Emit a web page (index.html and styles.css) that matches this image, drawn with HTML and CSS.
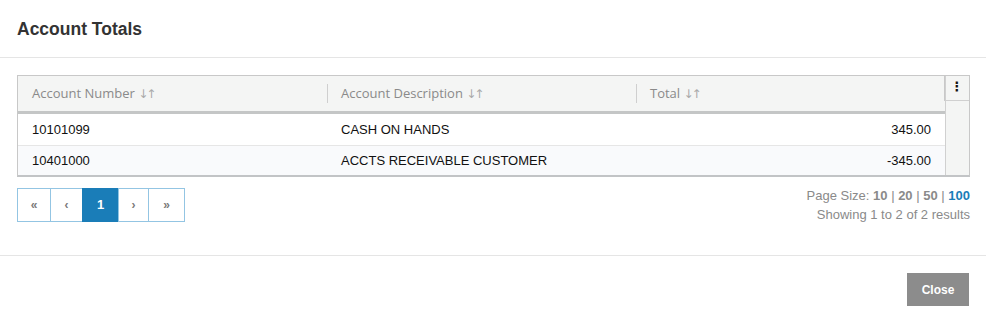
FILE: index.html
```html
<!DOCTYPE html>
<html lang="en">
<head>
    <meta charset="UTF-8">
    <title>Account Totals</title>
    <link rel="stylesheet" href="styles.css">
</head>
<body>
    <div class="modal">
        <div class="modal-header">
            <h4>Account Totals</h4>
        </div>

        <div class="modal-body">
            <div class="grid">
                <div class="grid-main">
                    <div class="grid-head">
                        <div class="col">Account Number <span class="sort">&#8595;&#8593;</span></div>
                        <div class="col sep">Account Description <span class="sort">&#8595;&#8593;</span></div>
                        <div class="col sep">Total <span class="sort">&#8595;&#8593;</span></div>
                    </div>
                    <div class="grid-row">
                        <div class="col">10101099</div>
                        <div class="col">CASH ON HANDS</div>
                        <div class="col num">345.00</div>
                    </div>
                    <div class="grid-row alt">
                        <div class="col">10401000</div>
                        <div class="col">ACCTS RECEIVABLE CUSTOMER</div>
                        <div class="col num">-345.00</div>
                    </div>
                </div>
                <div class="grid-scroll">
                    <div class="menu-btn">&#8942;</div>
                </div>
            </div>

            <div class="pager-bar">
                <ul class="pager">
                    <li class="first">&laquo;</li>
                    <li class="prev">&lsaquo;</li>
                    <li class="page active">1</li>
                    <li class="next">&rsaquo;</li>
                    <li class="last">&raquo;</li>
                </ul>
                <div class="pager-info">
                    <div>Page Size: <b>10</b> | <b>20</b> | <b>50</b> | <b class="current">100</b></div>
                    <div>Showing 1 to 2 of 2 results</div>
                </div>
            </div>
        </div>

        <div class="modal-footer">
            <button class="btn">Close</button>
        </div>
    </div>
</body>
</html>
```

FILE: styles.css
```css
body {
    margin: 0;
    font-family: "Liberation Sans", Arial, sans-serif;
    font-size: 13px;
    color: #222;
    background: #fff;
}
.modal {
    width: 986px;
    height: 320px;
    overflow: hidden;
}
.modal-header {
    padding: 18px 17px 0 17px;
    height: 39px;
    border-bottom: 1px solid #e5e5e5;
}
.modal-header h4 {
    margin: 0;
    font-size: 17.5px;
    font-weight: bold;
    color: #333;
    line-height: 22px;
}
.modal-body {
    padding: 17px 16px 0 17px;
    height: 180px;
}
.grid {
    display: flex;
    border: 1px solid #c8c8c8;
    border-bottom: 2px solid #c2c4c6;
}
.grid-main {
    flex: 1;
}
.grid-head {
    display: flex;
    height: 35px;
    align-items: center;
    background: #f4f5f4;
    border-bottom: 3px solid #c4c6c6;
    font-family: "Open Sans", "Noto Sans", sans-serif;
    font-size: 13px;
    color: #8a8a8a;
}
.col {
    flex: 1;
    padding: 0 14px;
    box-sizing: border-box;
    white-space: nowrap;
}
.grid-head .col {
    line-height: 18px;
}
.grid-head .sep {
    border-left: 1px solid #cfcfcf;
    padding-left: 13px;
}
.sort {
    font-family: "DejaVu Sans", sans-serif;
    font-size: 12px;
    color: #aaa;
    letter-spacing: -2px;
}
.grid-row {
    display: flex;
    height: 31px;
    align-items: center;
    background: #fff;
    color: #111;
}
.grid-row.alt {
    background: #f9fafc;
    border-top: 1px solid #e6e6e6;
    height: 29px;
}
.num {
    text-align: right;
}
.grid-scroll {
    width: 23px;
    background: #f4f5f4;
    border-left: 1px solid #d0d0d0;
}
.menu-btn {
    height: 24px;
    border-bottom: 1px solid #d0d0d0;
    border-left: 1px solid #c8c8c8;
    margin-left: -2px;
    text-align: center;
    font-family: "DejaVu Sans", sans-serif;
    font-weight: bold;
    font-size: 13px;
    line-height: 22px;
    color: #111;
}
.pager-bar {
    display: flex;
    justify-content: space-between;
    align-items: flex-start;
    margin-top: 11px;
}
.pager {
    display: flex;
    list-style: none;
    margin: 0;
    padding: 0;
    height: 34px;
}
.pager li {
    box-sizing: border-box;
    border: 1px solid #93c5e3;
    margin-left: -1px;
    text-align: center;
    line-height: 32px;
    font-size: 12px;
    font-weight: bold;
    color: #7a7a7a;
}
.pager li:first-child {
    margin-left: 0;
}
.pager .first { width: 34px; }
.pager .prev { width: 33px; }
.pager .page { width: 37px; }
.pager .next { width: 31px; }
.pager .last { width: 37px; }
.pager .active {
    background: #1a7db8;
    border-color: #1a7db8;
    color: #fff;
    font-size: 13px;
}
.pager-info {
    text-align: right;
    color: #8a8a8a;
    font-size: 13px;
    line-height: 19px;
    margin-top: -2px;
}
.pager-info b {
    color: #8a8a8a;
}
.pager-info b.current {
    color: #1a7db8;
}
.modal-footer {
    border-top: 1px solid #e5e5e5;
    padding: 17px 17px 0 17px;
    text-align: right;
}
.btn {
    width: 62px;
    height: 33px;
    border: none;
    background: #8c8c8c;
    color: #fff;
    font-family: "Liberation Sans", Arial, sans-serif;
    font-size: 12px;
    font-weight: bold;
    cursor: pointer;
}
```
